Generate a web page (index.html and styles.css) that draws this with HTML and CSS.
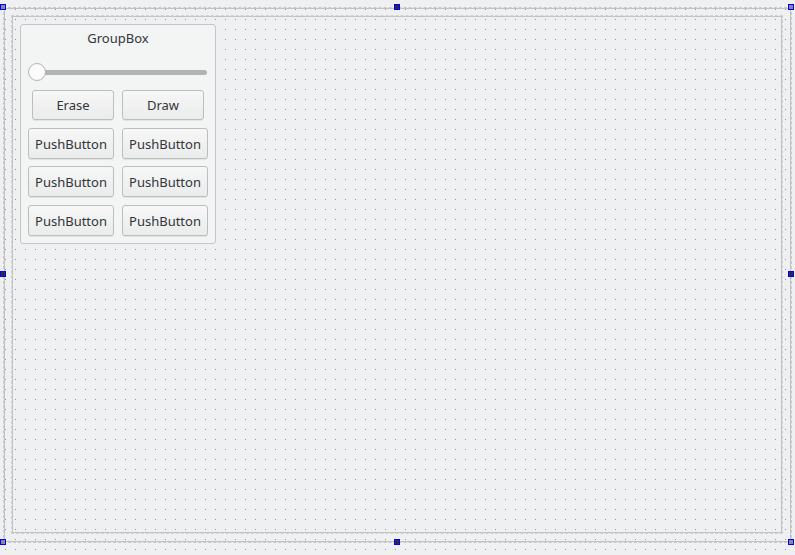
FILE: index.html
```html
<!DOCTYPE html>
<html>
<head>
<meta charset="utf-8">
<link rel="stylesheet" href="styles.css">
</head>
<body>
<div class="outer-frame">
  <span class="handle corner tl"></span>
  <span class="handle mid tm"></span>
  <span class="handle corner tr"></span>
  <span class="handle mid ml"></span>
  <span class="handle mid mr"></span>
  <span class="handle corner bl"></span>
  <span class="handle mid bm"></span>
  <span class="handle corner br"></span>
  <div class="inner-frame">
    <div class="groupbox">
      <div class="gb-title">GroupBox</div>
      <div class="slider">
        <div class="groove"></div>
        <div class="knob"></div>
      </div>
      <div class="btn-grid">
        <div class="cell cell-right"><button class="btn btn-narrow">Erase</button></div>
        <div class="cell cell-left"><button class="btn btn-narrow">Draw</button></div>
        <button class="btn btn-push">PushButton</button>
        <button class="btn btn-push">PushButton</button>
        <button class="btn btn-push">PushButton</button>
        <button class="btn btn-push">PushButton</button>
        <button class="btn btn-push">PushButton</button>
        <button class="btn btn-push">PushButton</button>
      </div>
    </div>
  </div>
</div>
</body>
</html>
```
FILE: styles.css
```css
html, body {
  margin: 0;
  padding: 0;
}
body {
  width: 795px;
  height: 555px;
  overflow: hidden;
  background-color: #eff0f1;
  background-image: url("data:image/svg+xml,%3Csvg xmlns='http://www.w3.org/2000/svg' width='10' height='10'%3E%3Crect x='0' y='0' width='1' height='1' fill='%23949494'/%3E%3C/svg%3E");
  background-position: 5px 9px;
  background-repeat: repeat;
  font-family: "Noto Sans", "DejaVu Sans", sans-serif;
  font-size: 13px;
  color: #31363b;
}
.outer-frame {
  position: relative;
  box-sizing: border-box;
  margin: 8px 0 0 4px;
  width: 787px;
  height: 534px;
  border: 1px solid #c2c2c2;
  outline: 1px dashed #cacaca;
  padding: 7px 0 0 7px;
}
.handle {
  position: absolute;
  box-sizing: border-box;
  width: 6px;
  height: 6px;
  border: 1px solid #0000ff;
  z-index: 2;
}
.handle.corner { background: #8a8a8a; }
.handle.mid { background: #2c2c3a; }
.tl { left: -5px; top: -5px; }
.tm { left: 389px; top: -5px; }
.tr { right: -4px; top: -5px; }
.ml { left: -5px; top: 262px; }
.mr { right: -4px; top: 262px; }
.bl { left: -5px; bottom: -4px; }
.bm { left: 389px; bottom: -4px; }
.br { right: -4px; bottom: -4px; }

.inner-frame {
  box-sizing: border-box;
  width: 770px;
  height: 517px;
  border: 1px solid #c2c2c2;
  outline: 1px dashed #d2d2d2;
  padding: 7px 0 0 7px;
}
.groupbox {
  box-sizing: border-box;
  width: 196px;
  height: 220px;
  border: 1px solid #c5c6c7;
  border-radius: 3px;
  background: #f3f4f4;
  padding: 4px 7px 0 7px;
}
.gb-title {
  height: 18px;
  line-height: 18px;
  text-align: center;
}
.slider {
  position: relative;
  box-sizing: border-box;
  margin-top: 16px;
  width: 180px;
  height: 18px;
  padding: 7px 1px 0 2px;
}
.groove {
  height: 5px;
  border-radius: 3px;
  background: #b3b3b3;
}
.knob {
  position: absolute;
  left: 0;
  top: 0;
  box-sizing: border-box;
  width: 18px;
  height: 18px;
  border-radius: 50%;
  border: 1px solid #b4b4b4;
  background: #fbfbfb;
}
.btn-grid {
  margin-top: 9px;
  display: grid;
  grid-template-columns: 86px 86px;
  grid-template-rows: 30px 30px 31px 30px;
  column-gap: 8px;
  row-gap: 8px;
  align-items: start;
}
.cell {
  display: flex;
}
.cell-right { justify-content: flex-end; }
.cell-left { justify-content: flex-start; }
.btn {
  box-sizing: border-box;
  width: 86px;
  height: 30px;
  margin: 0;
  padding: 0;
  border: 1px solid #bcbdbe;
  border-radius: 3px;
  background: linear-gradient(#f7f7f7, #eaebeb);
  box-shadow: 0 1px 0 rgba(0, 0, 0, 0.07);
  font-family: "Noto Sans", "DejaVu Sans", sans-serif;
  font-size: 13px;
  color: #31363b;
  line-height: 29px;
  text-align: center;
}
.btn-push {
  height: 31px;
  padding-top: 1px;
}
.btn-narrow {
  width: 82px;
}
```
